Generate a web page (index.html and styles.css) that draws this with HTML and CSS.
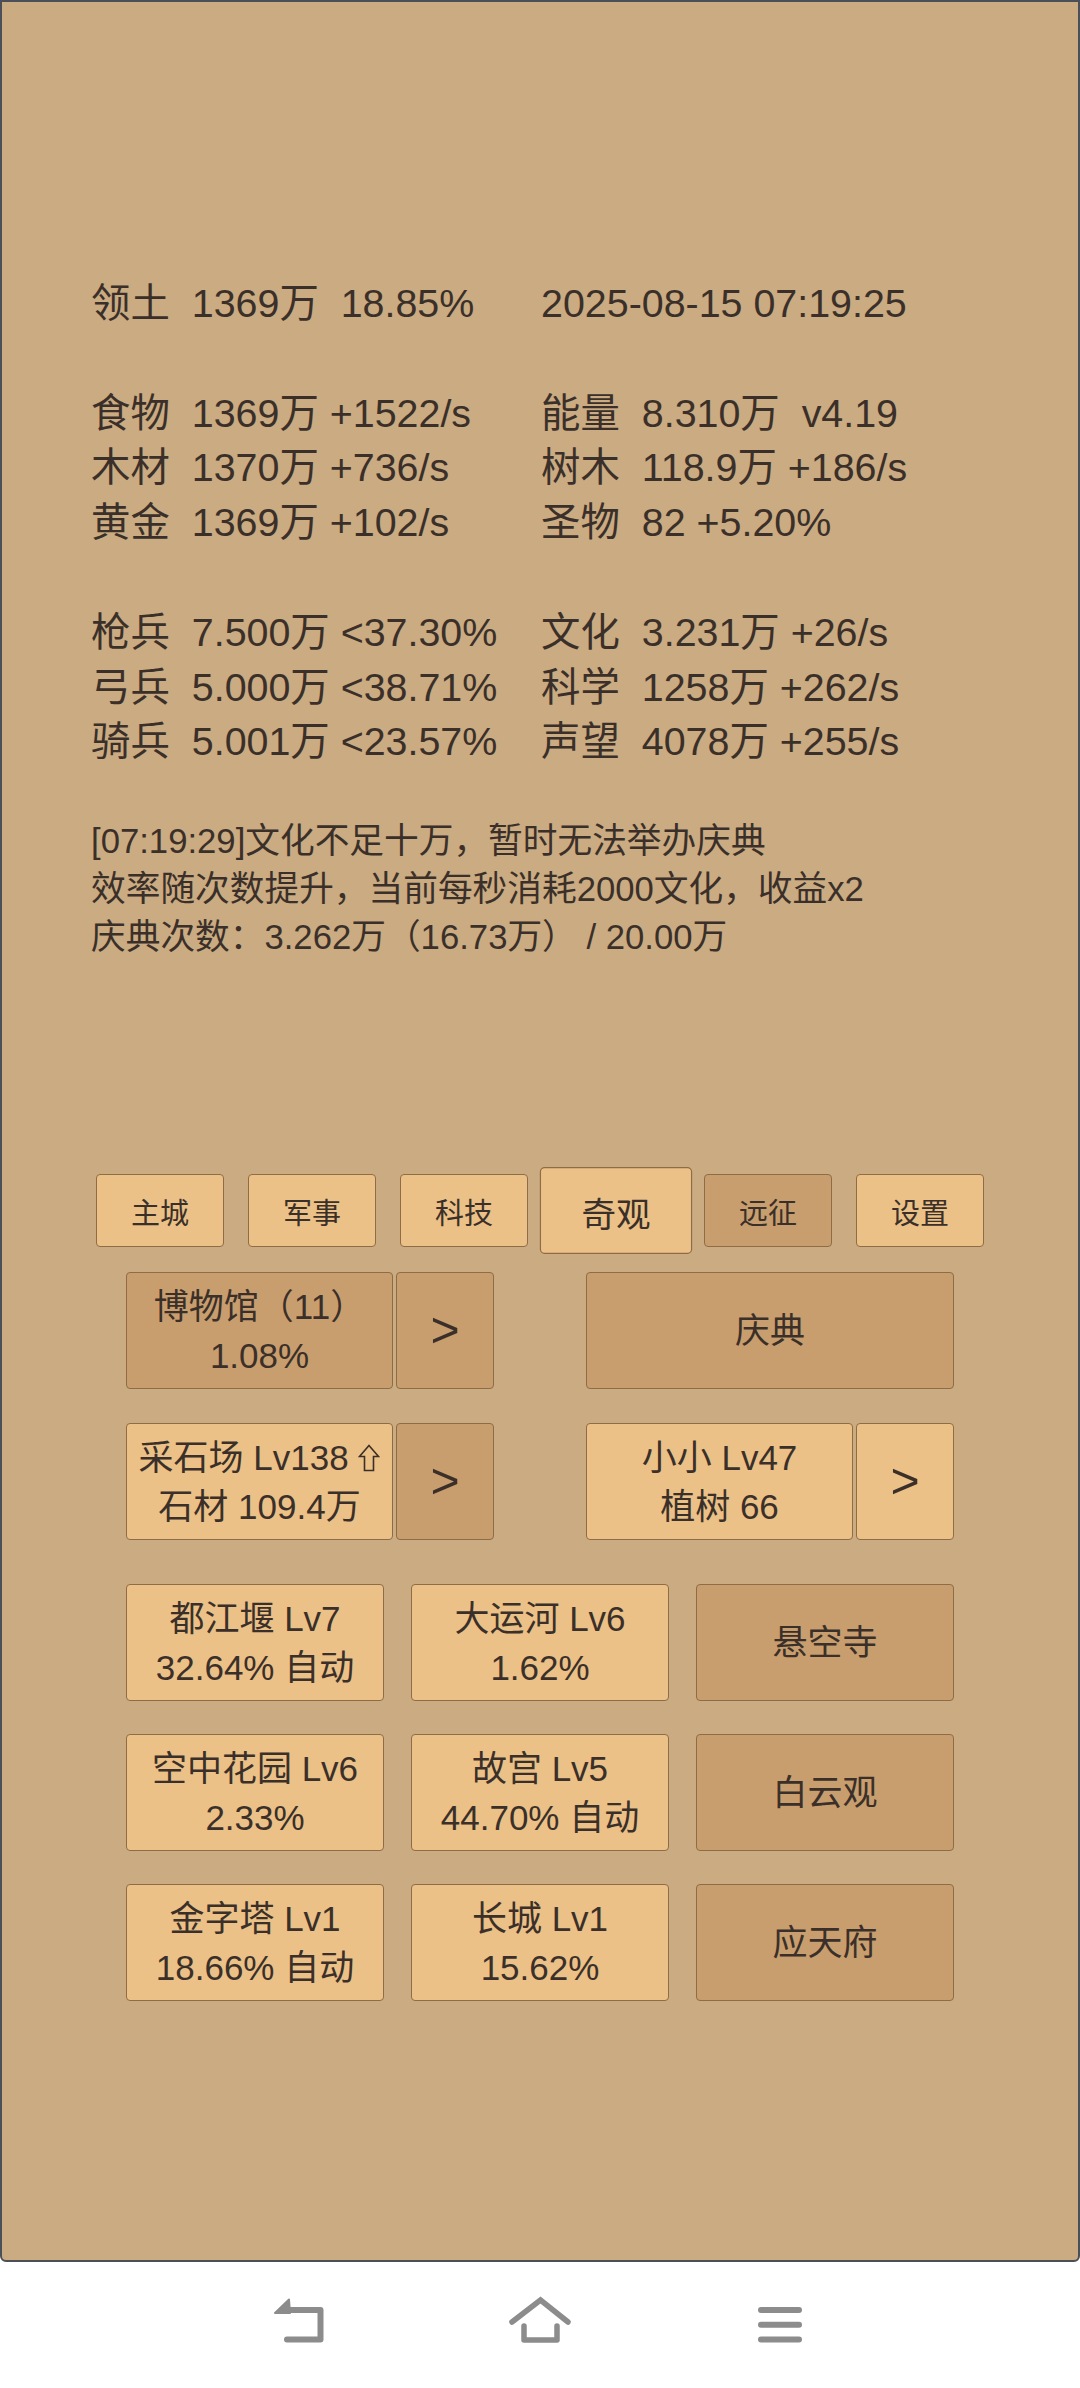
FILE: index.html
```html
<!DOCTYPE html>
<html lang="zh">
<head>
<meta charset="utf-8">
<title>奇观</title>
<link rel="stylesheet" href="styles.css">
</head>
<body>
<div class="frame">
  <div class="stats">
    <div class="group">
      <div class="cell"><span class="lbl">领土</span><span class="val">1369万  18.85%</span></div>
      <div class="cell"><span class="val">2025-08-15 07:19:25</span></div>
    </div>
    <div class="group">
      <div class="cell"><span class="lbl">食物</span><span class="val">1369万 +1522/s</span></div>
      <div class="cell"><span class="lbl">能量</span><span class="val">8.310万  v4.19</span></div>
      <div class="cell"><span class="lbl">木材</span><span class="val">1370万 +736/s</span></div>
      <div class="cell"><span class="lbl">树木</span><span class="val">118.9万 +186/s</span></div>
      <div class="cell"><span class="lbl">黄金</span><span class="val">1369万 +102/s</span></div>
      <div class="cell"><span class="lbl">圣物</span><span class="val">82 +5.20%</span></div>
    </div>
    <div class="group">
      <div class="cell"><span class="lbl">枪兵</span><span class="val">7.500万 &lt;37.30%</span></div>
      <div class="cell"><span class="lbl">文化</span><span class="val">3.231万 +26/s</span></div>
      <div class="cell"><span class="lbl">弓兵</span><span class="val">5.000万 &lt;38.71%</span></div>
      <div class="cell"><span class="lbl">科学</span><span class="val">1258万 +262/s</span></div>
      <div class="cell"><span class="lbl">骑兵</span><span class="val">5.001万 &lt;23.57%</span></div>
      <div class="cell"><span class="lbl">声望</span><span class="val">4078万 +255/s</span></div>
    </div>
  </div>

  <div class="msg">
    <div>[07:19:29]文化不足十万，暂时无法举办庆典</div>
    <div>效率随次数提升，当前每秒消耗2000文化，收益x2</div>
    <div>庆典次数：3.262万（16.73万） / 20.00万</div>
  </div>

  <div class="tabs">
    <div class="tab">主城</div>
    <div class="tab">军事</div>
    <div class="tab">科技</div>
    <div class="tab active">奇观</div>
    <div class="tab dark">远征</div>
    <div class="tab">设置</div>
  </div>

  <div class="panel">
    <div class="pair-row">
      <div class="half">
        <div class="btn dark"><span>博物馆（11）</span><span>1.08%</span></div>
        <div class="btn arrow dark">&gt;</div>
      </div>
      <div class="half">
        <div class="btn dark"><span>庆典</span></div>
      </div>
    </div>
    <div class="pair-row">
      <div class="half">
        <div class="btn"><span>采石场 Lv138 <svg class="up" viewBox="0 0 22 28" width="22" height="28"><path d="M11 1.5 L20.5 12.5 H15.5 V26.5 H6.5 V12.5 H1.5 Z" fill="none" stroke="#3b3029" stroke-width="1.6" stroke-linejoin="miter"/></svg></span><span>石材 109.4万</span></div>
        <div class="btn arrow dark">&gt;</div>
      </div>
      <div class="half">
        <div class="btn"><span>小小 Lv47</span><span>植树 66</span></div>
        <div class="btn arrow">&gt;</div>
      </div>
    </div>

    <div class="grid">
      <div class="btn"><span>都江堰 Lv7</span><span>32.64% 自动</span></div>
      <div class="btn"><span>大运河 Lv6</span><span>1.62%</span></div>
      <div class="btn dark"><span>悬空寺</span></div>
      <div class="btn"><span>空中花园 Lv6</span><span>2.33%</span></div>
      <div class="btn"><span>故宫 Lv5</span><span>44.70% 自动</span></div>
      <div class="btn dark"><span>白云观</span></div>
      <div class="btn"><span>金字塔 Lv1</span><span>18.66% 自动</span></div>
      <div class="btn"><span>长城 Lv1</span><span>15.62%</span></div>
      <div class="btn dark"><span>应天府</span></div>
    </div>
  </div>
</div>

<div class="nav">
  <svg class="nav-icon" viewBox="0 0 70 60" width="70" height="60">
    <path d="M22 47.5 H55.5 V18 H17" fill="none" stroke="#8c8c8c" stroke-width="6" stroke-linejoin="round" stroke-linecap="round"/>
    <path d="M10 21 L24 7.5 L25 21 Z" fill="#8c8c8c" stroke="#8c8c8c" stroke-width="2" stroke-linejoin="round"/>
  </svg>
  <svg class="nav-icon" viewBox="0 0 70 60" width="70" height="60">
    <path d="M7 30 L35.5 8 L63 30" fill="none" stroke="#8c8c8c" stroke-width="5.5" stroke-linejoin="miter" stroke-linecap="round"/>
    <path d="M19 34 V48 H52 V34" fill="none" stroke="#8c8c8c" stroke-width="5.5" stroke-linejoin="round" stroke-linecap="round"/>
  </svg>
  <svg class="nav-icon" viewBox="0 0 70 60" width="70" height="60">
    <path d="M16 18 H54 M16 32.7 H54 M16 47.5 H54" fill="none" stroke="#8c8c8c" stroke-width="6" stroke-linecap="round"/>
  </svg>
</div>
</body>
</html>
```

FILE: styles.css
```css
* {
  box-sizing: border-box;
}

html,
body {
  margin: 0;
  padding: 0;
}

body {
  width: 1080px;
  height: 2388px;
  overflow: hidden;
  background: #ffffff;
  font-family: "Liberation Sans", "Noto Sans CJK SC", sans-serif;
  color: #3b3029;
}

.frame {
  height: 2262px;
  background: #caab82;
  border: 2px solid #4b5058;
  border-radius: 0 0 6px 6px;
  padding-top: 274px;
}

.stats {
  margin-left: 89px;
  font-size: 39.4px;
  line-height: 54.8px;
}

.group {
  display: grid;
  grid-template-columns: 450px auto;
}

.group + .group {
  margin-top: 54.8px;
}

.cell {
  white-space: nowrap;
}

.lbl {
  margin-right: 22px;
}

.val {
  white-space: pre;
}

.msg {
  margin: 48px 0 0 89px;
  font-size: 34.7px;
  line-height: 48px;
}

.tabs {
  display: flex;
  justify-content: center;
  align-items: center;
  height: 73px;
  margin-top: 213px;
}

.tab {
  width: 128px;
  height: 73px;
  margin: 0 12px;
  display: flex;
  align-items: center;
  justify-content: center;
  font-size: 29px;
  background: #ebc187;
  border: 1.5px solid #8e6c46;
  border-radius: 4px;
}

.tab.active {
  transform: scale(1.19);
}

.tab.dark {
  background: #c99e6e;
}

.panel {
  width: 828px;
  margin: 25px auto 0;
}

.pair-row {
  display: flex;
  justify-content: space-between;
  height: 117px;
}

.pair-row + .pair-row {
  margin-top: 34px;
}

.half {
  width: 368px;
  display: flex;
  gap: 3px;
}

.btn {
  flex: 1;
  display: flex;
  flex-direction: column;
  align-items: center;
  justify-content: center;
  font-size: 35px;
  line-height: 49px;
  background: #ebc187;
  border: 1.5px solid #8e6c46;
  border-radius: 4px;
  white-space: nowrap;
}

.btn.dark {
  background: #c99e6e;
}

.arrow {
  flex: none;
  width: 98px;
  font-size: 50px;
}

.up {
  vertical-align: -2px;
}

.grid {
  display: grid;
  grid-template-columns: repeat(3, 258px);
  grid-auto-rows: 117px;
  column-gap: 27px;
  row-gap: 33px;
  margin-top: 44px;
}

.nav {
  height: 126px;
  display: flex;
  justify-content: center;
  align-items: center;
  gap: 170px;
  padding-bottom: 6px;
}

.nav-icon {
  display: block;
}
```
